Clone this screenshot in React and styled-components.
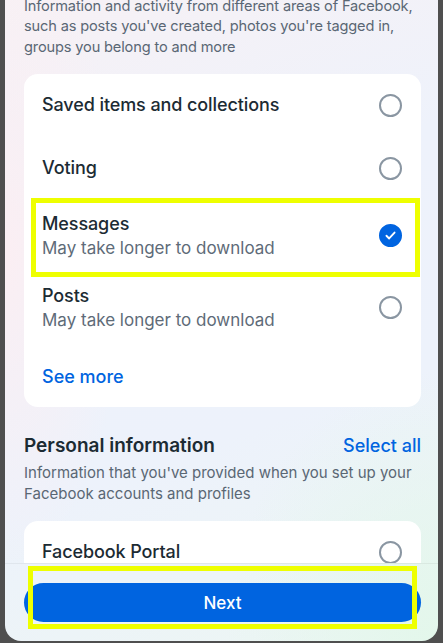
import React from "react";
import styled, { createGlobalStyle } from "styled-components";

const Global = createGlobalStyle`
  html, body { margin: 0; padding: 0; background: #4f4f4f; }
  body { font-family: Inter, "Noto Sans", "Liberation Sans", sans-serif; -webkit-font-smoothing: antialiased; }
  * { box-sizing: border-box; }
`;

const Frame = styled.div`
  position: relative;
  width: 433px;
  height: 641px;
  margin-left: 5px;
  border-radius: 0 0 16px 16px;
  overflow: hidden;
  display: flex;
  flex-direction: column;
  background:
    radial-gradient(ellipse 70% 60% at 100% 100%, rgba(226, 247, 234, 0.9), transparent 70%),
    radial-gradient(ellipse 40% 70% at 0% 40%, rgba(252, 238, 242, 0.9), transparent 70%),
    linear-gradient(160deg, #f7f1f5 0%, #eef2fb 35%, #edf2fb 65%, #ecf6f3 100%);
`;

const Scroll = styled.div`
  flex: 0 0 563px;
  overflow: hidden;
  padding: 0 17px 0 19px;
`;

const Intro = styled.p`
  margin: -4px 0 0;
  font-size: 14.6px;
  letter-spacing: -0.15px;
  line-height: 20.3px;
  color: #5a6774;
`;

const Card = styled.div`
  margin-top: ${(p) => p.$mt || 0}px;
  background: #fff;
  border-radius: 14px;
  overflow: hidden;
`;

const Row = styled.div`
  position: relative;
  display: flex;
  align-items: center;
  justify-content: space-between;
  min-height: ${(p) => (p.$tall ? 72 : 63)}px;
  padding: 0 19px 0 18px;
`;

const Texts = styled.div`
  display: flex;
  flex-direction: column;
`;

const Title = styled.div`
  font-size: 18px;
  letter-spacing: -0.1px;
  line-height: 24px;
  color: #1c2b33;
  font-weight: 500;
`;

const Sub = styled.div`
  font-size: 17px;
  line-height: 24px;
  color: #5e6b78;
`;

const Radio = styled.span`
  flex: none;
  width: 23px;
  height: 23px;
  border-radius: 50%;
  border: 2px solid ${(p) => (p.$on ? "#0064e0" : "#8a96a2")};
  background: ${(p) => (p.$on ? "#0064e0" : "#fff")};
  display: flex;
  align-items: center;
  justify-content: center;
`;

const LinkRow = styled.div`
  padding: 21px 18px 18px;
  font-size: 18px;
  line-height: 24px;
  font-weight: 500;
  color: #0064e0;
`;

const SectionHead = styled.div`
  margin-top: 27px;
  display: flex;
  align-items: center;
  justify-content: space-between;
`;

const SectionTitle = styled.div`
  font-size: 19px;
  line-height: 24px;
  font-weight: 600;
  color: #1c2b33;
`;

const SelectAll = styled.div`
  font-size: 18px;
  line-height: 24px;
  color: #0064e0;
  font-weight: 500;
`;

const Desc = styled.p`
  margin: 4px 0 0;
  font-size: 15px;
  line-height: 21px;
  color: #5a6774;
`;

const Footer = styled.div`
  flex: 1;
  border-top: 1px solid rgba(0, 0, 0, 0.05);
  padding: 19px 17px 0 19px;
`;

const Button = styled.button`
  width: 100%;
  height: 39px;
  border: none;
  border-radius: 20px;
  background: #0064e0;
  color: #fff;
  font-family: inherit;
  font-size: 17px;
  font-weight: 500;
`;

const Mark = styled.div`
  position: absolute;
  border: 5px solid #eeff00;
  pointer-events: none;
`;

const Check = () => (
  <svg width="13" height="13" viewBox="0 0 24 24">
    <path d="M4.5 12.5l5 5 10-11" fill="none" stroke="#fff" strokeWidth="3.4" strokeLinecap="round" strokeLinejoin="round" />
  </svg>
);

const items = [
  { title: "Saved items and collections" },
  { title: "Voting" },
  { title: "Messages", sub: "May take longer to download", on: true },
  { title: "Posts", sub: "May take longer to download" },
];

export default function App() {
  return (
    <>
      <Global />
      <Frame>
        <Scroll>
          <Intro>
            Information and activity from different areas of Facebook, such as posts you've created, photos you're tagged in, groups you belong to and more
          </Intro>
          <Card $mt={17}>
            {items.map((it) => (
              <Row key={it.title} $tall={!!it.sub}>
                <Texts>
                  <Title>{it.title}</Title>
                  {it.sub && <Sub>{it.sub}</Sub>}
                </Texts>
                <Radio $on={it.on}>{it.on && <Check />}</Radio>
              </Row>
            ))}
            <LinkRow>See more</LinkRow>
          </Card>
          <SectionHead>
            <SectionTitle>Personal information</SectionTitle>
            <SelectAll>Select all</SelectAll>
          </SectionHead>
          <Desc>Information that you've provided when you set up your Facebook accounts and profiles</Desc>
          <Card $mt={17}>
            <Row>
              <Texts>
                <Title>Facebook Portal</Title>
              </Texts>
              <Radio />
            </Row>
          </Card>
        </Scroll>
        <Footer>
          <Button>Next</Button>
        </Footer>
        <Mark style={{ left: 26, top: 198, width: 389, height: 79 }} />
        <Mark style={{ left: 23, top: 566, width: 389, height: 63 }} />
      </Frame>
    </>
  );
}
